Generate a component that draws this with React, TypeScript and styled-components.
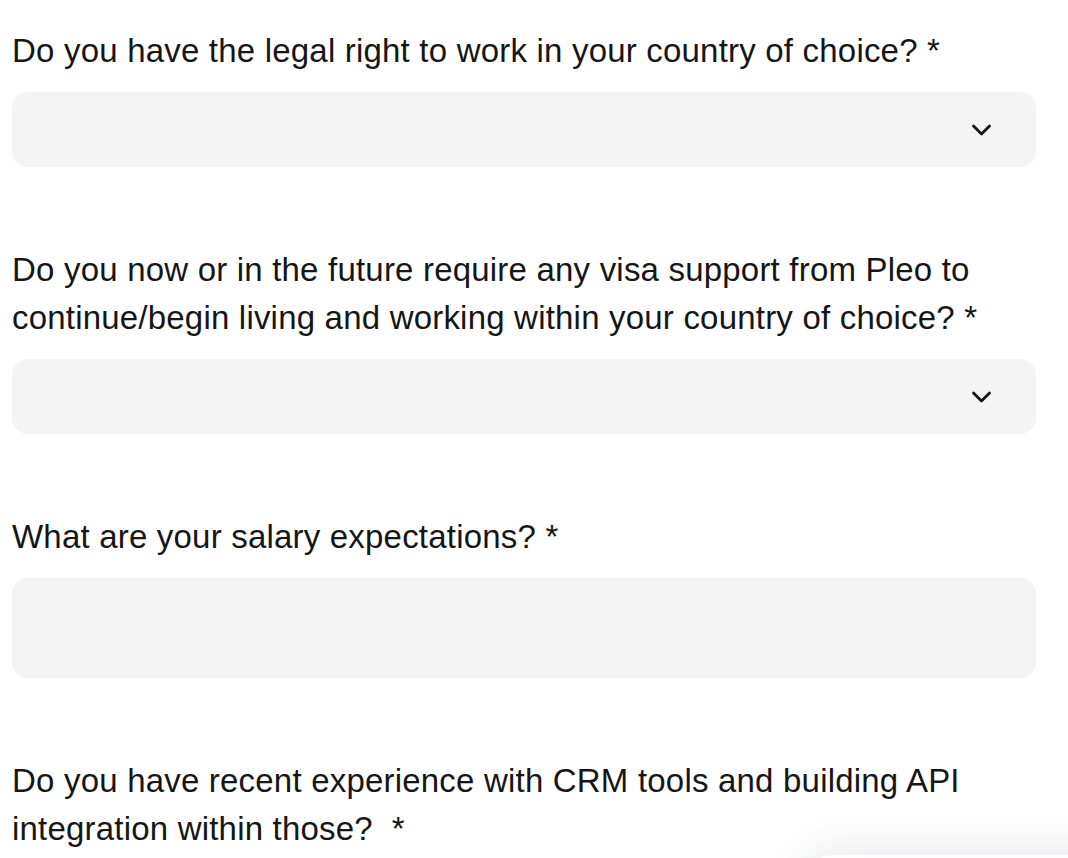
import * as React from 'react';
import styled, { createGlobalStyle } from 'styled-components';

const GlobalStyle = createGlobalStyle`
  html, body {
    margin: 0;
    padding: 0;
    background: #ffffff;
    overflow: hidden;
  }
  body {
    font-family: 'Liberation Sans', Arial, sans-serif;
    color: #161616;
  }
`;

type Question = {
  label: string;
  kind: 'select' | 'text' | 'none';
};

const questions: Question[] = [
  {
    label: 'Do you have the legal right to work in your country of choice? *',
    kind: 'select',
  },
  {
    label:
      'Do you now or in the future require any visa support from Pleo to continue/begin living and working within your country of choice? *',
    kind: 'select',
  },
  { label: 'What are your salary expectations? *', kind: 'text' },
  {
    label:
      'Do you have recent experience with CRM tools and building API integration within those?\u00a0\u00a0*',
    kind: 'none',
  },
];

export default function App() {
  return (
    <>
      <GlobalStyle />
      <Form>
        {questions.map((q) => (
          <Field key={q.label}>
            <Label>{q.label}</Label>
            {q.kind === 'select' && (
              <SelectBox>
                <Chevron viewBox="0 0 20 12" aria-hidden>
                  <path d="M2 2 L10 10 L18 2" />
                </Chevron>
              </SelectBox>
            )}
            {q.kind === 'text' && <TextInput />}
          </Field>
        ))}
      </Form>
      <FloatingCard />
    </>
  );
}

const Form = styled.div`
  display: flex;
  flex-direction: column;
  gap: 79px;
  padding: 27px 32px 0 12px;
`;

const Field = styled.div`
  display: flex;
  flex-direction: column;
  gap: 17px;
`;

const Label = styled.div`
  font-size: 33px;
  line-height: 48px;
  letter-spacing: 0.2px;
`;

const SelectBox = styled.div`
  height: 75px;
  border-radius: 16px;
  background: #f4f4f4;
  display: flex;
  align-items: center;
  justify-content: flex-end;
  padding-right: 44px;
`;

const Chevron = styled.svg`
  width: 21px;
  height: 12px;
  fill: none;
  stroke: #161616;
  stroke-width: 2.8;
  stroke-linecap: round;
  stroke-linejoin: round;
`;

const TextInput = styled.div`
  height: 100px;
  border-radius: 16px;
  background: #f4f4f4;
`;

const FloatingCard = styled.div`
  position: fixed;
  left: 808px;
  top: 855px;
  width: 400px;
  height: 200px;
  background: #ffffff;
  border-top-left-radius: 24px;
  box-shadow: 0 -4px 40px rgba(40, 60, 90, 0.12);
`;
